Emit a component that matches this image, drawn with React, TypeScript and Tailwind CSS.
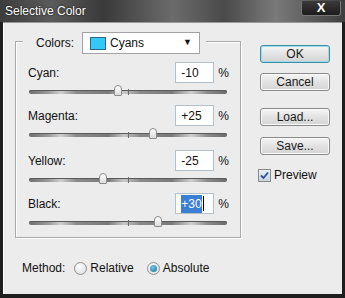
import React from "react";

const font = { fontFamily: '"Liberation Sans", Arial, sans-serif' };

const rows = [
  { label: "Cyan:", value: -10, text: "-10", gap: "mt-0" },
  { label: "Magenta:", value: 25, text: "+25", gap: "mt-[11px]" },
  { label: "Yellow:", value: -25, text: "-25", gap: "mt-[13px]" },
  { label: "Black:", value: 30, text: "+30", gap: "mt-[11px]", selected: true },
];

function Slider({ value }: { value: number }) {
  const left = ((value + 100) / 200) * 198;
  return (
    <div className="relative ml-[13px] mt-[7px] h-[4px] w-[198px] rounded-full bg-[linear-gradient(90deg,#707070_0%,#9a9a9a_10%,#cfcfcf_16%,#8a8a8a_24%,#7a7a7a_40%,#c8c8c8_48%,#8a8a8a_56%,#7a7a7a_72%,#cfcfcf_82%,#8a8a8a_90%,#6a6a6a_100%)] shadow-[inset_0_1px_0_#5a5a5a]">
      <div className="absolute left-[99px] top-[-1px] h-[6px] w-px bg-[#6a6a6a]" />
      <div
        className="absolute top-[-5px] h-[11px] w-[8px] -translate-x-1/2 rounded-t-[4px] rounded-b-[1px] border border-[#8c8c8c] bg-[linear-gradient(#ffffff,#dcdcdc)]"
        style={{ left }}
      />
    </div>
  );
}

function Button({ label, primary }: { label: string; primary?: boolean }) {
  return (
    <div
      className={
        "flex h-[18px] w-[70px] items-center justify-center rounded-[3px] border bg-[linear-gradient(#f6f6f6,#e2e2e2_50%,#d4d4d4)] text-[12px] text-[#1a1a1a] " +
        (primary ? "border-[#3c8ea2] shadow-[inset_0_0_0_1px_#9fdbe8]" : "border-[#8a8a8a] shadow-[inset_0_0_0_1px_#fafafa]")
      }
    >
      {label}
    </div>
  );
}

function Radio({ checked, label }: { checked?: boolean; label: string }) {
  return (
    <div className="flex items-center gap-[3px]">
      <div className="flex h-[13px] w-[13px] items-center justify-center rounded-full border border-[#8f8f8f] bg-[radial-gradient(circle_at_40%_35%,#ffffff,#d8d8d8)]">
        {checked && <div className="h-[7px] w-[7px] rounded-full bg-[radial-gradient(circle_at_40%_35%,#6fc7ea,#1a6f98)]" />}
      </div>
      <span>{label}</span>
    </div>
  );
}

export default function App() {
  return (
    <div className="h-[298px] w-[345px] overflow-hidden bg-[#1e1e1e] text-[12px] text-[#111]" style={font}>
      <div className="flex h-[22px] items-center justify-between bg-[linear-gradient(90deg,#3d3d3d_0%,#5a5a5a_15%,#3a3a3a_30%,#6b6b6b_50%,#4a4a4a_65%,#7a7a7a_80%,#3e3e3e_100%)] pl-[5px] pr-[4px]">
        <span className="text-[12px] text-white [text-shadow:0_0_2px_#000]">Selective Color</span>
        <div className="mb-[6px] flex h-[15px] w-[40px] items-center justify-center rounded-b-[3px] border border-[#777] border-t-0 bg-[linear-gradient(#3a3a3a,#1c1c1c)] text-[13px] font-bold text-white">
          X
        </div>
      </div>
      <div className="mx-[3px] flex h-[272px] flex-col border-t border-[#9a9a9a] bg-[#ececec] shadow-[inset_1px_0_0_#fff]">
        <div className="flex">
          <div className="relative ml-[12px] mt-[18px] h-[197px] w-[226px] border border-[#a9a9a9] shadow-[inset_1px_1px_0_#fff,1px_1px_0_#fff]">
            <div className="absolute left-[7px] top-[-10px] flex items-center bg-[#ececec] pl-[13px] pr-[6px]">
              <span className="text-[12px]">Colors:</span>
              <div className="ml-[8px] flex h-[22px] w-[118px] items-center border border-[#a3a3a3] bg-white px-[7px]">
                <div className="h-[13px] w-[16px] border border-[#2a6a88] bg-[#33c8f6]" />
                <span className="ml-[4px] text-[12px]">Cyans</span>
                <span className="ml-auto text-[9px]">▼</span>
              </div>
            </div>
            <div className="flex flex-col pt-[20px]">
              {rows.map((r) => (
                <div key={r.label} className={r.gap}>
                  <div className="flex h-[21px] items-center">
                    <span className="ml-[12px]">{r.label}</span>
                    <div className="ml-auto flex h-[21px] w-[39px] items-center border border-[#b4bfc8] bg-white pl-[5px] text-[12px]">
                      {r.selected ? (
                        <>
                          <span className="bg-[#3a7fd4] text-white">{r.text}</span>
                          <span className="ml-px h-[15px] w-px bg-black" />
                        </>
                      ) : (
                        <span>{r.text}</span>
                      )}
                    </div>
                    <span className="ml-[4px] mr-[11px]">%</span>
                  </div>
                  <Slider value={r.value} />
                </div>
              ))}
            </div>
          </div>
          <div className="ml-[19px] mt-[22px] flex flex-col">
            <Button label="OK" primary />
            <div className="mt-[10px]">
              <Button label="Cancel" />
            </div>
            <div className="mt-[17px]">
              <Button label="Load..." />
            </div>
            <div className="mt-[11px]">
              <Button label="Save..." />
            </div>
            <div className="ml-[-2px] mt-[11px] flex items-center gap-[3px]">
              <div className="flex h-[13px] w-[13px] items-center justify-center border border-[#8a8a8a] bg-[linear-gradient(#e8eef6,#c8d4e2)]">
                <svg width="9" height="9" viewBox="0 0 9 9">
                  <path d="M1 4.5 L3.5 7 L8 1.5" fill="none" stroke="#2a4f96" strokeWidth="1.8" />
                </svg>
              </div>
              <span>Preview</span>
            </div>
          </div>
        </div>
        <div className="ml-[19px] mt-[21px] flex items-center gap-[4px]">
          <span className="mr-[5px]">Method:</span>
          <Radio label="Relative" />
          <div className="ml-[9px]">
            <Radio label="Absolute" checked />
          </div>
        </div>
      </div>
    </div>
  );
}
